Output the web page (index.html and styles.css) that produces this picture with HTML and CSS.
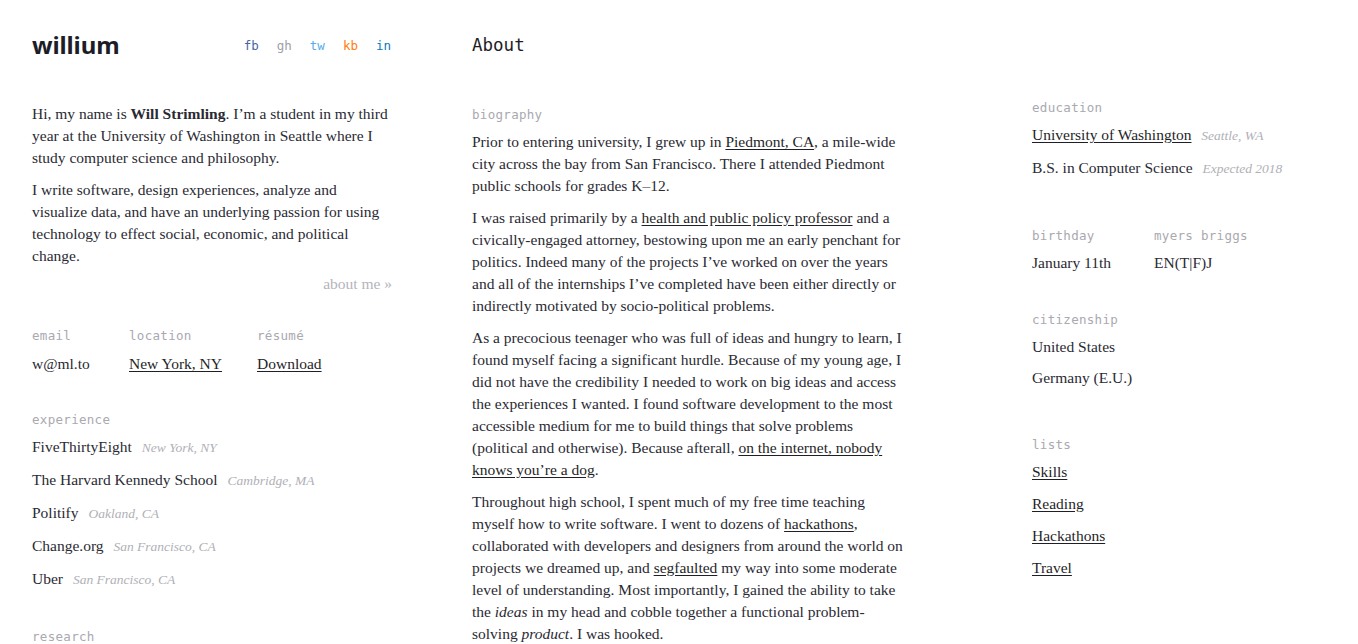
FILE: index.html
```html
<!DOCTYPE html>
<html lang="en">
<head>
<meta charset="utf-8">
<title>willium — About</title>
<link rel="stylesheet" href="styles.css">
</head>
<body>
<div class="page">
  <aside class="left">
    <header class="brand">
      <div class="logo">willium</div>
      <nav class="social">
        <a class="fb">fb</a>
        <a class="gh">gh</a>
        <a class="tw">tw</a>
        <a class="kb">kb</a>
        <a class="in">in</a>
      </nav>
    </header>
    <section class="intro">
      <p>Hi, my name is <b>Will Strimling</b>. I’m a student in my third<br>year at the University of Washington in Seattle where I<br>study computer science and philosophy.</p>
      <p>I write software, design experiences, analyze and<br>visualize data, and have an underlying passion for using<br>technology to effect social, economic, and political<br>change.</p>
      <div class="more">about me »</div>
    </section>
    <section class="contact">
      <div class="field">
        <div class="label">email</div>
        <div class="value">w@ml.to</div>
      </div>
      <div class="field">
        <div class="label">location</div>
        <div class="value"><a>New York, NY</a></div>
      </div>
      <div class="field">
        <div class="label">résumé</div>
        <div class="value"><a>Download</a></div>
      </div>
    </section>
    <section class="experience">
      <div class="label">experience</div>
      <ul class="list">
        <li>FiveThirtyEight <span class="note">New York, NY</span></li>
        <li>The Harvard Kennedy School <span class="note">Cambridge, MA</span></li>
        <li>Politify <span class="note">Oakland, CA</span></li>
        <li>Change.org <span class="note">San Francisco, CA</span></li>
        <li>Uber <span class="note">San Francisco, CA</span></li>
      </ul>
    </section>
    <section class="research">
      <div class="label">research</div>
    </section>
  </aside>

  <main class="middle">
    <h1 class="title">About</h1>
    <div class="label bio-label">biography</div>
    <div class="bio">
      <p>Prior to entering university, I grew up in <a>Piedmont, CA</a>, a mile-wide<br>city across the bay from San Francisco. There I attended Piedmont<br>public schools for grades K–12.</p>
      <p>I was raised primarily by a <a>health and public policy professor</a> and a<br>civically-engaged attorney, bestowing upon me an early penchant for<br>politics. Indeed many of the projects I’ve worked on over the years<br>and all of the internships I’ve completed have been either directly or<br>indirectly motivated by socio-political problems.</p>
      <p>As a precocious teenager who was full of ideas and hungry to learn, I<br>found myself facing a significant hurdle. Because of my young age, I<br>did not have the credibility I needed to work on big ideas and access<br>the experiences I wanted. I found software development to the most<br>accessible medium for me to build things that solve problems<br>(political and otherwise). Because afterall, <a>on the internet, nobody<br>knows you’re a dog</a>.</p>
      <p>Throughout high school, I spent much of my free time teaching<br>myself how to write software. I went to dozens of <a>hackathons</a>,<br>collaborated with developers and designers from around the world on<br>projects we dreamed up, and <a>segfaulted</a> my way into some moderate<br>level of understanding. Most importantly, I gained the ability to take<br>the <i>ideas</i> in my head and cobble together a functional problem-<br>solving <i>product</i>. I was hooked.</p>
    </div>
  </main>

  <aside class="right">
    <section class="block edu">
      <div class="label">education</div>
      <ul class="list">
        <li><a>University of Washington</a> <span class="note">Seattle, WA</span></li>
        <li>B.S. in Computer Science <span class="note">Expected 2018</span></li>
      </ul>
    </section>
    <section class="block pair">
      <div class="field">
        <div class="label">birthday</div>
        <div class="value">January 11th</div>
      </div>
      <div class="field">
        <div class="label">myers briggs</div>
        <div class="value">EN(T|F)J</div>
      </div>
    </section>
    <section class="block citizen">
      <div class="label">citizenship</div>
      <ul class="list tight">
        <li>United States</li>
        <li>Germany (E.U.)</li>
      </ul>
    </section>
    <section class="block lists">
      <div class="label">lists</div>
      <ul class="list links">
        <li><a>Skills</a></li>
        <li><a>Reading</a></li>
        <li><a>Hackathons</a></li>
        <li><a>Travel</a></li>
      </ul>
    </section>
  </aside>
</div>
</body>
</html>
```

FILE: styles.css
```css
* { box-sizing: border-box; }
html, body { margin: 0; padding: 0; background: #fff; }
body {
  font-family: "Liberation Serif", "Times New Roman", serif;
  font-size: 15.5px;
  line-height: 22px;
  color: #2a2a33;
}
a { color: #1f1f28; text-decoration: underline; text-underline-offset: 2px; }
p { margin: 0 0 10px; }
ul { list-style: none; margin: 0; padding: 0; }
.note {
  font-style: italic;
  color: #b0b0b6;
  font-size: 13.5px;
  line-height: 1;
  margin-left: 6px;
}

.page {
  display: flex;
  padding: 0 0 0 32px;
}

.label {
  font-family: "DejaVu Sans Mono", monospace;
  font-size: 12.5px;
  line-height: 16px;
  color: #a9a9b0;
  letter-spacing: 0.3px;
}
.value { margin-top: 9px; }
.list { display: flex; flex-direction: column; gap: 11px; margin-top: 8px; }
.list li { height: 22px; }

/* left column */
.left { width: 360px; flex: none; }
.brand {
  display: flex;
  align-items: center;
  justify-content: space-between;
  height: 60px;
  padding-top: 30px;
  margin-bottom: 43px;
}
.logo {
  font-family: "Noto Sans", sans-serif;
  font-weight: 700;
  font-size: 24px;
  line-height: 30px;
  color: #1d1d28;
  letter-spacing: -0.1px;
}
.social { display: flex; gap: 18px; padding-top: 2px; padding-right: 1px; }
.social a {
  font-family: "DejaVu Sans Mono", monospace;
  font-size: 12.5px;
  text-decoration: none;
}
.social .fb { color: #4565a8; }
.social .gh { color: #a0a0a6; }
.social .tw { color: #55acee; }
.social .kb { color: #ff7c0a; }
.social .in { color: #0a7bc0; }

.intro p, .bio p { white-space: nowrap; }
.intro p:last-of-type { margin-bottom: 6px; }
.more { text-align: right; color: #b4b4bc; }

.contact { display: flex; margin-top: 33px; }
.contact .field:nth-child(1) { width: 97px; }
.contact .field:nth-child(2) { width: 128px; }

.experience { margin-top: 37px; }
.research { margin-top: 39px; }

/* middle column */
.middle { width: 440px; flex: none; margin-left: 80px; }
.title {
  font-family: "DejaVu Sans Mono", monospace;
  font-weight: normal;
  font-size: 17.5px;
  color: #1d1d28;
  margin: 34px 0 0;
  line-height: 22px;
}
.bio-label { margin-top: 51px; margin-bottom: 8px; }

/* right column */
.right { width: 300px; flex: none; margin-left: 120px; padding-top: 100px; }
.edu { margin-bottom: 49px; }
.pair { display: flex; margin-bottom: 38px; }
.pair .value { margin-top: 8px; }
.pair .field:first-child { width: 122px; }
.citizen { margin-bottom: 48px; }
.list.tight { gap: 9px; }
.list.links { gap: 10px; }
```
